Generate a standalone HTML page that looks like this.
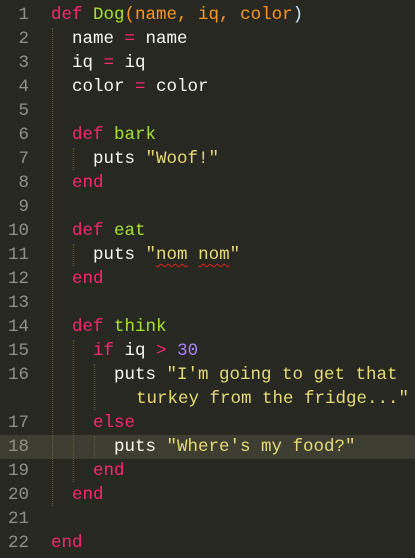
<!DOCTYPE html>
<html><head><style>
body{margin:0;background:#272822;width:415px;height:558px;overflow:hidden;position:relative;font-family:"Liberation Mono",monospace;font-size:17.5px;color:#f8f8f2}
.l{position:absolute;left:0;width:415px;height:24px;line-height:24px;white-space:pre}
.n{position:absolute;left:0;width:29px;text-align:right;color:#8f908a}
.c{position:absolute}
.hl{background:#3e3d32}
.k{color:#f92672}.g{color:#a6e22e}.o{color:#fd971f}.s{color:#e6db74}.p{color:#ae81ff}
.u{text-decoration:underline wavy #e0201b;text-underline-offset:4px;text-decoration-thickness:1px}
.gd{position:absolute;width:0;border-left:1px dotted #6b5a3a}
</style></head><body>
<div class="l" style="top:3px"><span class="n">1</span><span class="c" style="left:51px"><span class="k">def</span> <span class="g">Dog</span><span class="o">(name, iq, color</span><span style="color:#cfe8ff">)</span></span></div>
<div class="l" style="top:27px"><span class="n">2</span><span class="c" style="left:72px">name <span class="k">=</span> name</span></div>
<div class="l" style="top:51px"><span class="n">3</span><span class="c" style="left:72px">iq <span class="k">=</span> iq</span></div>
<div class="l" style="top:75px"><span class="n">4</span><span class="c" style="left:72px">color <span class="k">=</span> color</span></div>
<div class="l" style="top:99px"><span class="n">5</span></div>
<div class="l" style="top:123px"><span class="n">6</span><span class="c" style="left:72px"><span class="k">def</span> <span class="g">bark</span></span></div>
<div class="l" style="top:147px"><span class="n">7</span><span class="c" style="left:93px">puts <span class="s">"Woof!"</span></span></div>
<div class="l" style="top:171px"><span class="n">8</span><span class="c k" style="left:72px">end</span></div>
<div class="l" style="top:195px"><span class="n">9</span></div>
<div class="l" style="top:219px"><span class="n">10</span><span class="c" style="left:72px"><span class="k">def</span> <span class="g">eat</span></span></div>
<div class="l" style="top:243px"><span class="n">11</span><span class="c" style="left:93px">puts <span class="s">"<span class="u">nom</span> <span class="u">nom</span>"</span></span></div>
<div class="l" style="top:267px"><span class="n">12</span><span class="c k" style="left:72px">end</span></div>
<div class="l" style="top:291px"><span class="n">13</span></div>
<div class="l" style="top:315px"><span class="n">14</span><span class="c" style="left:72px"><span class="k">def</span> <span class="g">think</span></span></div>
<div class="l" style="top:339px"><span class="n">15</span><span class="c" style="left:93px"><span class="k">if</span> iq <span class="k">&gt;</span> <span class="p">30</span></span></div>
<div class="l" style="top:363px"><span class="n">16</span><span class="c" style="left:114px">puts <span class="s">"I'm going to get that</span></span></div>
<div class="l" style="top:387px"><span class="c s" style="left:136px">turkey from the fridge..."</span></div>
<div class="l" style="top:411px"><span class="n">17</span><span class="c k" style="left:93px">else</span></div>
<div class="l hl" style="top:435px"><span class="n">18</span><span class="c" style="left:114px">puts <span class="s">"Where's my food?"</span></span></div>
<div class="l" style="top:459px"><span class="n">19</span><span class="c k" style="left:93px">end</span></div>
<div class="l" style="top:483px"><span class="n">20</span><span class="c k" style="left:72px">end</span></div>
<div class="l" style="top:507px"><span class="n">21</span></div>
<div class="l" style="top:531px"><span class="n">22</span><span class="c k" style="left:51px">end</span></div>
<div class="gd" style="left:52px;top:28px;height:478px"></div>
<div class="gd" style="left:73px;top:148px;height:22px"></div>
<div class="gd" style="left:73px;top:244px;height:22px"></div>
<div class="gd" style="left:73px;top:340px;height:142px"></div>
<div class="gd" style="left:94px;top:364px;height:46px"></div>
<div class="gd" style="left:94px;top:436px;height:22px"></div>
</body></html>
